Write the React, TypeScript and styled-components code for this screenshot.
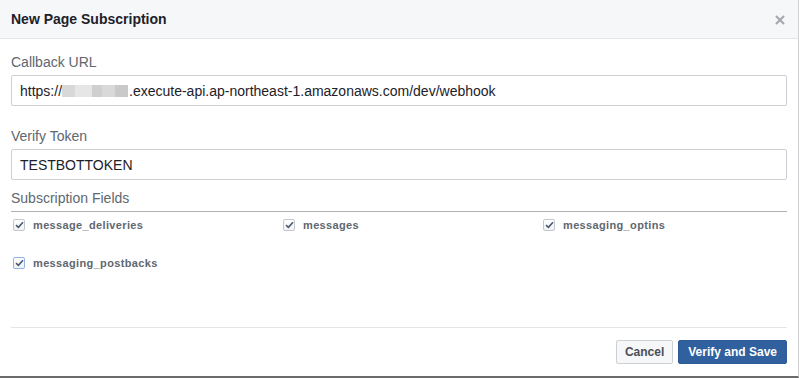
import React from "react";
import styled, { createGlobalStyle } from "styled-components";

const Global = createGlobalStyle`
  html, body { margin: 0; padding: 0; background: #fff; }
  body { font-family: "Liberation Sans", Arial, Helvetica, sans-serif; }
  * { box-sizing: border-box; }
`;

const Dialog = styled.div`
  width: 799px;
  height: 378px;
  background: #fff;
  border-right: 1px solid #d0d1d5;
  border-bottom: 2px solid #6b6b6b;
  display: flex;
  flex-direction: column;
`;

const Header = styled.div`
  height: 39px;
  background: #f6f7f9;
  border-bottom: 1px solid #e5e5e5;
  display: flex;
  align-items: center;
  justify-content: space-between;
  padding: 0 12px 0 11px;
`;

const Title = styled.h2`
  margin: 0;
  font-size: 14px;
  font-weight: bold;
  color: #1d2129;
  line-height: 18px;
`;

const Close = styled.button`
  border: 0;
  background: transparent;
  padding: 0;
  width: 12px;
  height: 12px;
  display: flex;
  align-items: center;
  justify-content: center;
  margin-top: 2px;
`;

const Body = styled.div`
  flex: 1;
  padding: 14px 11px 0 11px;
  display: flex;
  flex-direction: column;
`;

const Label = styled.div<{ $mt?: number }>`
  font-size: 14px;
  color: #606770;
  line-height: 18px;
  margin-top: ${(p) => p.$mt ?? 0}px;
`;

const Field = styled.div`
  margin-top: 4px;
  width: 776px;
  height: 31px;
  border: 1px solid #ccd0d5;
  border-radius: 2px;
  display: flex;
  align-items: center;
  padding: 0 8px;
  font-size: 14px;
  color: #1d2129;
  white-space: nowrap;
`;

const Blur = styled.span`
  display: inline-flex;
  height: 12px;
  width: 66px;
  margin: 0 1px 0 0;
  background: linear-gradient(90deg, #d8d8d8 0 20%, #e6e6e6 20% 45%, #cfcfcf 45% 60%, #d9d9d9 60% 80%, #c9c9c9 80% 100%);
`;

const FieldsHeader = styled.div`
  margin-top: 9px;
  width: 776px;
  border-bottom: 1px solid #aeb1b6;
  padding-bottom: 4px;
  font-size: 14px;
  color: #606770;
  line-height: 18px;
`;

const Grid = styled.div`
  display: grid;
  grid-template-columns: 270px 260px 1fr;
  row-gap: 24px;
  padding: 6px 0 0 2px;
`;

const Option = styled.label`
  display: flex;
  align-items: center;
  gap: 8px;
  height: 14px;
  font-size: 11px;
  font-weight: bold;
  letter-spacing: 0.35px;
  color: #606770;
`;

const Box = styled.span<{ $focus?: boolean }>`
  width: 12px;
  height: 12px;
  border: 1px solid ${(p) => (p.$focus ? "#8fb3ea" : "#c4c7cc")};
  border-radius: 2px;
  background: linear-gradient(#ffffff, #f1f2f4);
  display: flex;
  align-items: center;
  justify-content: center;
`;

const Footer = styled.div`
  margin: auto 11px 0 11px;
  border-top: 1px solid #e5e5e5;
  display: flex;
  justify-content: flex-end;
  gap: 5px;
  padding: 12px 0 12px 0;
`;

const Button = styled.button<{ $primary?: boolean }>`
  height: 24px;
  padding: 0 ${(p) => (p.$primary ? 9 : 8)}px;
  border-radius: 2px;
  font-family: "Liberation Sans", Arial, sans-serif;
  font-size: 12px;
  font-weight: bold;
  line-height: 22px;
  border: 1px solid ${(p) => (p.$primary ? "#2f5c98" : "#ced0d4")};
  background: ${(p) => (p.$primary ? "#30609e" : "#f6f7f9")};
  color: ${(p) => (p.$primary ? "#fff" : "#4b4f56")};
`;

const Check = () => (
  <svg width="9" height="8" viewBox="0 0 9 8">
    <path d="M1 4.2 L3.4 6.4 L8 1.2" fill="none" stroke="#4b5a6e" strokeWidth="1.6" />
  </svg>
);

const fields = [
  { name: "message_deliveries" },
  { name: "messages" },
  { name: "messaging_optins" },
  { name: "messaging_postbacks", focus: true },
];

export default function App() {
  return (
    <>
      <Global />
      <Dialog>
        <Header>
          <Title>New Page Subscription</Title>
          <Close aria-label="Close">
            <svg width="10" height="10" viewBox="0 0 10 10">
              <path d="M1 1 L9 9 M9 1 L1 9" stroke="#a5a8ad" strokeWidth="2.2" />
            </svg>
          </Close>
        </Header>
        <Body>
          <Label>Callback URL</Label>
          <Field>
            https://<Blur />.execute-api.ap-northeast-1.amazonaws.com/dev/webhook
          </Field>
          <Label $mt={21}>Verify Token</Label>
          <Field>TESTBOTTOKEN</Field>
          <FieldsHeader>Subscription Fields</FieldsHeader>
          <Grid>
            {fields.map((f) => (
              <Option key={f.name}>
                <Box $focus={f.focus}>
                  <Check />
                </Box>
                {f.name}
              </Option>
            ))}
          </Grid>
        </Body>
        <Footer>
          <Button>Cancel</Button>
          <Button $primary>Verify and Save</Button>
        </Footer>
      </Dialog>
    </>
  );
}
